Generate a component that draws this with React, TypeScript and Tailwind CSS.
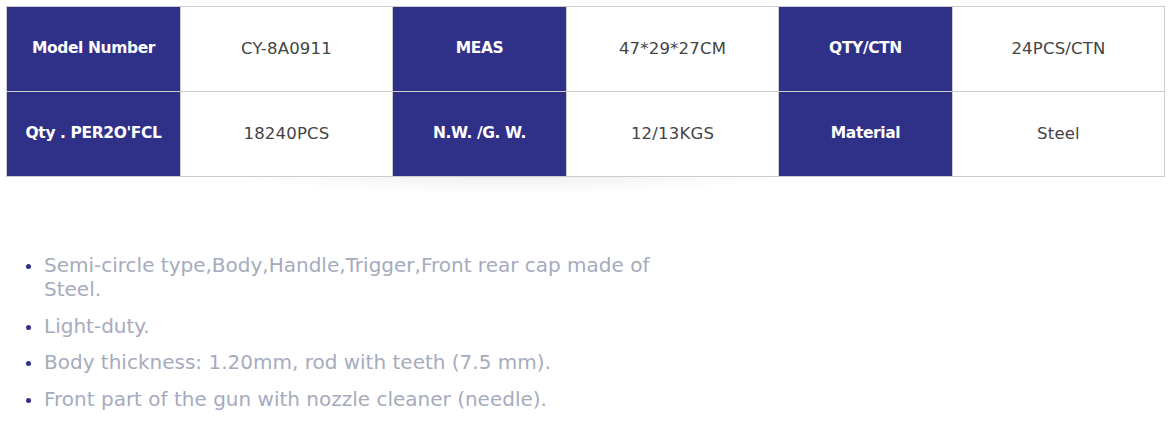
import React from 'react';

const rows = [
  [
    ['Model Number', 'CY-8A0911'],
    ['MEAS', '47*29*27CM'],
    ['QTY/CTN', '24PCS/CTN'],
  ],
  [
    ["Qty . PER2O'FCL", '18240PCS'],
    ['N.W. /G. W.', '12/13KGS'],
    ['Material', 'Steel'],
  ],
];

const features = [
  'Semi-circle type,Body,Handle,Trigger,Front rear cap made of Steel.',
  'Light-duty.',
  'Body thickness: 1.20mm, rod with teeth (7.5 mm).',
  'Front part of the gun with nozzle cleaner (needle).',
];

export default function App() {
  return (
    <div
      className="w-[1175px] h-[421px] bg-white overflow-hidden"
      style={{ fontFamily: '"DejaVu Sans", "Open Sans", sans-serif' }}
    >
      <div className="relative pt-[6px] pl-[6px]">
        <div className="absolute left-[230px] top-[150px] w-[560px] h-[45px] rounded-[50%] bg-[radial-gradient(ellipse_at_center,rgba(0,0,0,0.07),rgba(0,0,0,0)_70%)]" />
        <table className="relative border-collapse border border-[#cccccc]">
          <tbody>
            {rows.map((row, i) => (
              <tr key={i} className="h-[85px]">
                {row.map(([label, value]) => (
                  <React.Fragment key={label}>
                    <td className="w-[174px] bg-[#2f3088] text-white text-[15.5px] font-semibold text-center border-b border-[#cccccc] tracking-[-0.4px]">
                      {label}
                    </td>
                    <td className="w-[212px] bg-white text-[#444444] text-[16.5px] text-center border border-[#cccccc] tracking-[0.2px]">
                      {value}
                    </td>
                  </React.Fragment>
                ))}
              </tr>
            ))}
          </tbody>
        </table>
      </div>

      <ul className="mt-[76px] pl-[26px] flex flex-col gap-[12.5px] text-[20px] leading-[24px] text-[#a6abbe]">
        {features.map((f) => (
          <li key={f} className="flex items-start gap-[13px]">
            <span className="mt-[11px] w-[5px] h-[5px] rounded-full bg-[#2f3088] shrink-0" />
            <span className="w-[625px]">{f}</span>
          </li>
        ))}
      </ul>
    </div>
  );
}
